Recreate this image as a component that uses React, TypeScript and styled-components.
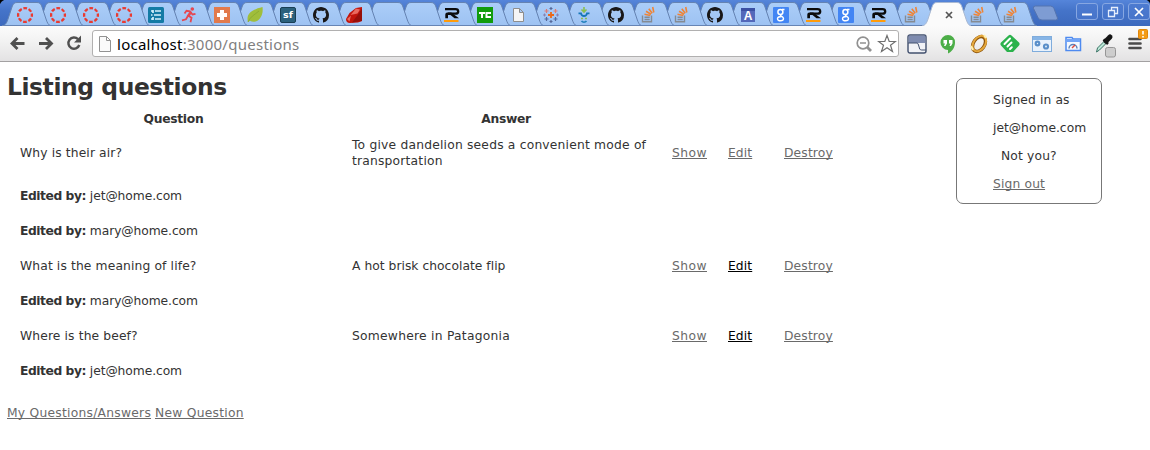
import React from "react";
import styled, { createGlobalStyle } from "styled-components";

const GlobalStyle = createGlobalStyle`
  * { box-sizing: border-box; }
  body {
    margin: 0;
    background: #fff;
    color: #333;
    font-family: "DejaVu Sans", Verdana, sans-serif;
    font-size: 12.3px;
    line-height: 16px;
  }
`;

const Window = styled.div`
  width: 1150px;
  height: 450px;
  overflow: hidden;
  background: #fff;
`;

const TabStrip = styled.div`
  display: flex;
  height: 26px;
  padding: 2px 0 0 2px;
  background:
    radial-gradient(circle at 7px 7px, transparent 7px, #000 8px) 0 0 / 6px 6px no-repeat,
    radial-gradient(circle at 0 6px, transparent 6px, #000 7px) 100% 0 / 6px 6px no-repeat,
    linear-gradient(#5585da, #4574c9 40%, #3c69bd);
`;

const TabBox = styled.div<{ $order: number }>`
  display: grid;
  flex: none;
  width: 49px;
  height: 24px;
  margin-right: -16.15px;
  position: relative;
  z-index: ${(p) => p.$order};
  > * { grid-area: 1 / 1; }
`;

const IconSlot = styled.div<{ $shift?: number }>`
  display: flex;
  width: 16px;
  height: 16px;
  margin: 5px 0 0 ${(p) => 15 + (p.$shift ?? 0)}px;
  svg { display: block; overflow: visible; }
`;

const NewTab = styled.svg`
  flex: none;
  margin: 3px 0 0 11px;
`;

const Controls = styled.div`
  display: flex;
  gap: 4px;
  margin: 1px 0 0 auto;
`;

const Control = styled.div`
  display: flex;
  align-items: center;
  justify-content: center;
  width: 22px;
  height: 17px;
  border: 1px solid #87a7e2;
  border-radius: 3px;
  background: linear-gradient(#4d7bd0, #4674ca);
`;

const Toolbar = styled.div`
  display: flex;
  align-items: center;
  height: 36px;
  padding-left: 8px;
  border-bottom: 1px solid #a3a1a2;
  background: linear-gradient(#fbfbfb, #f3f3f3 40%, #e3e2e3);
`;

const NavButton = styled.div`
  display: flex;
  width: 28px;
  height: 28px;
  align-items: center;
  svg { display: block; }
`;

const Omnibox = styled.div`
  display: flex;
  align-items: center;
  width: 807px;
  height: 27px;
  padding: 0 1px 0 6px;
  border: 1px solid #b1b0b0;
  border-radius: 3px;
  background: #fff;
  svg { flex: none; }
`;

const Url = styled.div`
  flex: 1;
  padding-left: 6px;
  color: #808080;
  font: 15px/24px "Noto Sans", "Open Sans", sans-serif;
  letter-spacing: 0.26px;
  b { color: #000; font-weight: 400; }
`;

const Extensions = styled.div`
  display: flex;
  align-items: center;
  padding-left: 8px;
  gap: 11.15px;
  svg { display: block; flex: none; overflow: visible; }
`;

const Page = styled.div`
  display: flex;
  align-items: flex-start;
  padding: 11px 48px 0 7px;
`;

const Main = styled.main`
  flex: 1;
`;

const Title = styled.h1`
  margin: 0;
  height: 37px;
  font-size: 23.4px;
  line-height: 28px;
  font-weight: 700;
  letter-spacing: -0.41px;
`;

const Row = styled.div<{ $height: number }>`
  display: grid;
  grid-template-columns: 332px 320px 56px 56px 80px;
  align-items: center;
  height: ${(p) => p.$height}px;
  padding-left: 13px;
`;

const HeadCell = styled.div<{ $width: number }>`
  width: ${(p) => p.$width}px;
  text-align: center;
  font-weight: 700;
  letter-spacing: -0.3px;
`;

const Editor = styled.div`
  grid-column: 1 / -1;
  letter-spacing: -0.08px;
  b { font-weight: 700; letter-spacing: -0.45px; }
`;

const Text = styled.span<{ $spacing?: number }>`
  letter-spacing: ${(p) => p.$spacing ?? 0.2}px;
`;

const Link = styled.a<{ $hot?: boolean; $spacing?: number }>`
  color: ${(p) => (p.$hot ? "#000" : "#6a6a6a")};
  letter-spacing: ${(p) => p.$spacing ?? 0.25}px;
  text-decoration: underline;
  text-decoration-thickness: 1px;
  text-underline-offset: 1px;
  text-decoration-skip-ink: none;
`;

const Footer = styled.div`
  margin-top: 17px;
`;

const Account = styled.aside`
  width: 146px;
  height: 126px;
  margin-top: 5px;
  padding: 7px 0 0 36px;
  border: 1px solid #777;
  border-radius: 7px;
  line-height: 28px;
`;

const AccountLine = styled.div<{ $indent?: number; $spacing?: number }>`
  padding-left: ${(p) => p.$indent ?? 0}px;
  letter-spacing: ${(p) => p.$spacing ?? 0}px;
`;

type IconName =
  | "ring" | "list" | "runner" | "plus" | "leaf" | "sf" | "github" | "ruby" | "none" | "r"
  | "tc" | "doc" | "tableau" | "smile" | "stack" | "a" | "g" | "close";

const Icon = ({ name }: { name: IconName }) => (
  <svg width="16" height="16" viewBox="0 0 16 16">
    {name === "ring" && (
      <circle cx="8" cy="8" r="6.9" fill="none" stroke="#ea3a30" strokeWidth="2.3" strokeDasharray="3.7 1.719" strokeDashoffset="1.85" />
    )}
    {name === "list" && (
      <>
        <rect width="16" height="16" rx="1.5" fill="#147ba5" />
        <path d="M3 4h2m2 0h6M6 8h7M3 8h1.5M3 12h2m2 0h6M5 3v3m0 4v3" stroke="#d5f1fc" strokeWidth="1.7" fill="none" />
      </>
    )}
    {name === "runner" && (
      <>
        <circle cx="11.3" cy="2" r="1.8" fill="#e54750" />
        <path d="M10 4.5 7 8.5l3.5 2.2-1 4.5M7 8.8l-2 3.5-4 1M9.5 4.5l-4-.7L3.5 6.5M9.5 5l2 2.5 3-.7" fill="none" stroke="#e54750" strokeWidth="1.8" />
        <path d="m9.500 4-3 4.500 2 1 2.500-4z" fill="#e54750" />
      </>
    )}
    {name === "plus" && (
      <>
        <rect width="16" height="16" fill="#e27a4c" />
        <path d="M6 3h4v3h3v4h-3v3H6v-3H3V6h3z" fill="#fff" />
      </>
    )}
    {name === "leaf" && (
      <>
        <path d="M1 15C-1 8 3 3 15.5 0c1 7-2 13-7 14.500-2 .7-4 .2-5.500-.7z" fill="#a0be3b" />
        <path d="M1 15C3 10 7 8 12 4" stroke="#8dac32" fill="none" />
      </>
    )}
    {name === "sf" && (
      <>
        <rect x=".5" y=".5" width="15" height="15" rx="1.5" fill="#2b617d" stroke="#183e54" />
        <text x="8" y="11" textAnchor="middle" fontFamily="DejaVu Sans" fontSize="9.5" fontWeight="700" fill="#fff">sf</text>
      </>
    )}
    {name === "github" && (
      <path
        fill="#191717"
        d="M8 0C3.580 0 0 3.580 0 8c0 3.540 2.290 6.530 5.470 7.590.4.070.55-.17.55-.38 0-.19-.01-.82-.01-1.490-2.010.37-2.530-.49-2.690-.94-.09-.23-.48-.94-.82-1.130-.28-.15-.68-.52-.01-.53.63-.01 1.080.58 1.230.82.72 1.210 1.870.87 2.330.66.070-.52.28-.87.51-1.070-1.780-.2-3.640-.89-3.640-3.950 0-.87.31-1.590.82-2.150-.08-.2-.36-1.020.08-2.120 0 0 .67-.21 2.200.82.64-.18 1.320-.27 2-.27s1.360.09 2 .27c1.530-1.040 2.200-.82 2.200-.82.44 1.100.16 1.920.08 2.120.51.56.82 1.270.82 2.150 0 3.070-1.870 3.750-3.650 3.950.29.25.54.73.54 1.480 0 1.070-.01 1.930-.01 2.200 0 .21.15.46.55.38A8.010 8.010 0 0 0 16 8c0-4.420-3.580-8-8-8z"
      />
    )}
    {name === "ruby" && (
      <>
        <path d="M0 12 3.500 6 10 1l6-1v14l-4 1.500-8 .5q-4 0-4-4z" fill="#c2150c" />
        <path d="m10 1.500 4 1-2.500 4L4.500 8zM1 12l4-3.500-1.500 6z" fill="#ea6a5f" />
        <path d="m12 7.500 4-6V14l-10 1.500z" fill="#960f0a" />
      </>
    )}
    {name === "r" && (
      <>
        <path d="M1 2.200h10.500q2.700 0 2.700 2.200t-2.700 2.300H4" fill="none" stroke="#0b0b0b" strokeWidth="2.300" />
        <path d="M1.300 11.300V7.500q0-2 2-2h4l7.700 5.800h-4.500L6.500 8H4v3.300z" fill="#0b0b0b" />
        <path d="M0 14h14.500" stroke="#ff9b0a" strokeWidth="2" />
      </>
    )}
    {name === "tc" && (
      <>
        <rect width="16" height="16" fill="#119c0c" />
        <path d="M2 6h6M5 5v6m9-5H9.500v4H14" stroke="#fff" strokeWidth="2" fill="none" />
      </>
    )}
    {name === "doc" && <path d="M3.500 1.500h6l4 4v9h-10zM9.500 1.500v4h4" fill="#f5f5f5" stroke="#8e8e8e" />}
    {name === "tableau" && (
      <g fill="none">
        <path d="M8 5v6M5 8h6" stroke="#ec6717" strokeWidth="1.800" />
        <path d="M3.500 2v4m-2-2h4M12.500 2v4m-2-2h4" stroke="#e07a72" strokeWidth="1.200" />
        <path d="M3.500 10v4m-2-2h4M12.500 10v4m-2-2h4M8 0v3M6.500 1.500h3M8 13v3m-1.500-1.500h3" stroke="#56699a" strokeWidth="1.200" />
        <path d="M1.500 6.500v3M0 8h3m11.500-1.500v3M13 8h3" stroke="#8c80af" />
      </g>
    )}
    {name === "smile" && (
      <g fill="none">
        <path d="M8 0v4M5.500 2.500 8 5l2.500-2.500" stroke="#8abe50" strokeWidth="1.600" />
        <path d="M2.500 6.300H5q.5 2.700 3 2.700t3-2.700h2.500" stroke="#1576b8" strokeWidth="1.800" />
        <path d="M5 11.500h2m2 0h2" stroke="#8abe50" strokeWidth="1.500" />
        <path d="M5.500 14c1 1.500 4 1.500 5 0" stroke="#2382bd" strokeWidth="1.500" />
      </g>
    )}
    {name === "stack" && (
      <g fill="none">
        <path d="M1.500 8.500v6.300h9V8.500M3.500 12.500h5.200M3.500 10.300h5.200" stroke="#858b93" strokeWidth="1.400" />
        <path d="m3.500 7.300 5.800 1.200M5 4.300l5 3M7.800 1.800l3.400 4.400M11.700 0l1.100 5.500" stroke="#ef8436" strokeWidth="1.600" />
      </g>
    )}
    {name === "a" && (
      <>
        <rect x="1" y="1" width="14" height="14" fill="#5368ba" />
        <path d="M1 1h14v3H1z" fill="#3b50a3" />
        <text x="8" y="13" textAnchor="middle" fontFamily="Liberation Sans" fontSize="12" fontWeight="700" fill="#fff">A</text>
      </>
    )}
    {name === "g" && (
      <>
        <rect width="16" height="16" rx="1" fill="#4285f4" />
        <g fill="none" stroke="#fff">
          <circle cx="7.400" cy="5" r="2.500" strokeWidth="1.500" />
          <path d="M9 2.500h2.500M7.500 7.500c-1 1.500 3 1.500 3 4 0 3-6 3-6 .300 0-1.800 2-2.300 4-2.300" strokeWidth="1.400" />
        </g>
      </>
    )}
    {name === "close" && <path d="m5 5 6 6m0-6-6 6" stroke="#555" strokeWidth="1.700" />}
  </svg>
);

const tabs: IconName[] = [
  "ring", "ring", "ring", "ring", "list", "runner", "plus", "leaf", "sf", "github", "ruby",
  "none", "none", "r", "tc", "doc", "tableau", "smile", "github", "stack", "stack", "github",
  "a", "g", "r", "g", "r", "stack", "close", "stack", "stack",
];

const Tab = ({ name, order }: { name: IconName; order: number }) => {
  const active = name === "close";
  const outline = "M0 24C4 23 5 20 6 17L10 5C11 2 12 .5 15 .5H35C38 .5 39 2 40 5L44 17C45 20 46 23 49 24";
  return (
    <TabBox $order={active ? 50 : order}>
      <svg width="49" height="24">
        <defs>
          <linearGradient id="tabFill" x2="0" y2="1">
            <stop stopColor="#abcdf8" />
            <stop offset="1" stopColor="#9dc2f2" />
          </linearGradient>
        </defs>
        <path d={outline} fill={active ? "#fbfbfb" : "url(#tabFill)"} stroke={active ? "#a9b9d3" : "#6583b2"} />
        {!active && <path d="M0 23.500h49" stroke="#6684b4" />}
      </svg>
      <IconSlot $shift={active ? 4 : 0}>
        <Icon name={name} />
      </IconSlot>
    </TabBox>
  );
};

const BrowserBar = () => (
  <>
    <TabStrip>
      {tabs.map((name, i) => (
        <Tab key={i} name={name} order={40 - i} />
      ))}
      <NewTab width="27" height="17">
        <path d="M3.500 1h15q2.500 0 3.500 2.500l3.500 9.500q.5 2-2 2H10q-3 0-4-2.500L1.500 3.500Q.8 1 3.500 1z" fill="#7e9cd3" stroke="#5474b0" />
      </NewTab>
      <Controls>
        <Control>
          <svg width="14" height="12"><path d="M2 8.500h10" stroke="#fff" strokeWidth="2" /></svg>
        </Control>
        <Control>
          <svg width="12" height="12" fill="none" stroke="#e6eefc" strokeWidth="1.300">
            <path d="M4.500 4V1.500h6v6H8M1.500 4.500h6v6h-6z" />
          </svg>
        </Control>
        <Control>
          <svg width="12" height="12"><path d="m2 2 8 8m0-8-8 8" stroke="#fff" strokeWidth="1.700" /></svg>
        </Control>
      </Controls>
    </TabStrip>
    <Toolbar>
      <NavButton>
        <svg width="20" height="20" fill="none" stroke="#505050" strokeWidth="2.800"><path d="M16.500 9.500H4M9.500 4 4 9.500 9.500 15" /></svg>
      </NavButton>
      <NavButton>
        <svg width="20" height="20" fill="none" stroke="#505050" strokeWidth="2.800"><path d="M3 9.500h12.500M10 4l5.500 5.500L10 15" /></svg>
      </NavButton>
      <NavButton>
        <svg width="20" height="20"><path d="M14 5.200A5.600 5.600 0 1 0 15.300 11" fill="none" stroke="#505050" strokeWidth="2.400" /><path d="M17 1.500v7h-7z" fill="#505050" /></svg>
      </NavButton>
      <Omnibox>
        <svg width="12" height="16" fill="#fafafa" stroke="#929292"><path d="M.5.5h7l4 4v11H.5zM7.500.5v4h4" /></svg>
        <Url><b>localhost</b>:3000/questions</Url>
        <svg width="18" height="18" fill="none" stroke="#919191"><circle cx="8" cy="8" r="5.800" strokeWidth="1.700" /><path d="M5 8h6" strokeWidth="1.500" /><path d="m12 12 4 4" strokeWidth="2.800" /></svg>
        <svg width="20" height="20" style={{ marginLeft: 4 }} fill="#fff" stroke="#707070" strokeWidth="1.200"><path d="m10 1.500 2.200 6h6.300l-5 3.800 2 6.200-5.500-3.800-5.500 3.800 2-6.200-5-3.800h6.300z" /></svg>
      </Omnibox>
      <Extensions>
        <svg width="20" height="20">
          <rect x="1" y="1" width="18" height="18" rx="2" fill="#f1f2f6" stroke="#42506e" strokeWidth="1.400" />
          <path d="M1.700 1.700h16.600V9H1.700z" fill="#7f8cb0" /><path d="M1 9h9q1 0 1.500 2l1.200 4q.5 1 2 1H19" fill="none" stroke="#42506e" />
        </svg>
        <svg width="20" height="20">
          <path d="M10 1a7.200 7.200 0 1 0 0 15v3.500c4-2 7-6 7-11A7 7 0 0 0 10 1z" fill="#4cae48" />
          <path d="M5.500 6H9v3.500L7.500 12H6l1-2.500H5.500zM11 6h3.500v3.500L13 12h-1.500l1-2.500H11z" fill="#fff" />
        </svg>
        <svg width="20" height="20" fill="none">
          <ellipse cx="10" cy="10" rx="5.500" ry="8.200" transform="rotate(35 10 10)" stroke="#8f560c" strokeWidth="3.400" />
          <ellipse cx="10" cy="9.500" rx="5.800" ry="8.500" transform="rotate(35 10 10)" stroke="#e5a83c" strokeWidth="2" />
          <path d="m2 12 2 4m11-15 2 3" stroke="#fff0b2" strokeWidth="2" />
        </svg>
        <svg width="20" height="20">
          <path d="M8.500 1.500q1.500-1.500 3 0L19 8.500q1.200 1.500 0 3L13 18H7l-6-6.500q-1.200-1.500 0-3z" fill="#2bb24c" />
          <path d="m4.500 10 5.500-5.500M7.500 12.500l4-4M10 15l1.800-1.800" stroke="#fff" strokeWidth="2" strokeLinecap="round" />
        </svg>
        <svg width="20" height="20">
          <rect x=".5" y="2.500" width="19" height="15" fill="#e9f2fc" stroke="#7facdc" /><path d="M1 3h18v3H1z" fill="#87b5e6" />
          <circle cx="5.500" cy="9.500" r="1.800" fill="none" stroke="#5a8fc9" strokeWidth="2.200" />
          <circle cx="14" cy="12.500" r="2" fill="none" stroke="#5a8fc9" strokeWidth="2.200" />
        </svg>
        <svg width="20" height="20">
          <path d="M3 3.500h6l1 1.500h7.500v11.500H3z" fill="#f4f8ff" stroke="#4e8af0" strokeWidth="1.500" /><path d="M3 5h14v3H3z" fill="#72a4f6" />
          <path d="M6 14.500a4 4 0 0 1 8 0" fill="none" stroke="#5c82ba" strokeWidth="1.500" /><path d="m9 14 3-3" stroke="#e24c3e" strokeWidth="1.500" />
        </svg>
        <svg width="20" height="20">
          <path d="m2.500 18 1-4 7-7 2 2-7 7z" fill="#bce7d7" stroke="#397365" /><path d="m9.500 5.500 4.500 4.500" stroke="#151515" strokeWidth="2.500" />
          <path d="m12 7 4-4" stroke="#151515" strokeWidth="5" strokeLinecap="round" />
          <rect x="11.500" y="13.500" width="10" height="9.500" rx="2" fill="#cdcdcd" stroke="#969696" />
        </svg>
        <svg width="20" height="20">
          <path d="M4.500 5h11M4.500 9.500h11M4.500 14h11" stroke="#4b4b4b" strokeWidth="2.600" strokeLinecap="round" />
          <rect x="13.500" y="-4.500" width="9" height="9" rx="1" fill="#f39b16" stroke="#e28709" /><path d="M18-3v3.500M18 2v1.500" stroke="#fff" strokeWidth="1.600" />
        </svg>
      </Extensions>
    </Toolbar>
  </>
);

interface Entry {
  question: string;
  answer: string;
  height: number;
  hot: boolean;
  spacing: number;
  editors: string[];
}

const entries: Entry[] = [
  { question: "Why is their air?", answer: "To give dandelion seeds a convenient mode of transportation", height: 51, hot: false, spacing: 0.2, editors: ["jet@home.com", "mary@home.com"] },
  { question: "What is the meaning of life?", answer: "A hot brisk chocolate flip", height: 35, hot: true, spacing: 0.03, editors: ["mary@home.com"] },
  { question: "Where is the beef?", answer: "Somewhere in Patagonia", height: 35, hot: true, spacing: 0.25, editors: ["jet@home.com"] },
];

export default function App() {
  return (
    <Window>
      <GlobalStyle />
      <BrowserBar />
      <Page>
        <Main>
          <Title>Listing questions</Title>
          <Row $height={17}>
            <HeadCell $width={307}>Question</HeadCell>
            <HeadCell $width={308}>Answer</HeadCell>
          </Row>
          {entries.map((e) => (
            <React.Fragment key={e.question}>
              <Row $height={e.height}>
                <Text $spacing={0.13}>{e.question}</Text>
                <Text $spacing={e.spacing}>{e.answer}</Text>
                <span><Link $spacing={0.45}>Show</Link></span>
                <span><Link $hot={e.hot} $spacing={0.1}>Edit</Link></span>
                <span><Link $spacing={0.15}>Destroy</Link></span>
              </Row>
              {e.editors.map((who) => (
                <Row $height={35} key={who}>
                  <Editor><b>Edited by:</b> {who}</Editor>
                </Row>
              ))}
            </React.Fragment>
          ))}
          <Footer><Link>My Questions/Answers</Link> <Link>New Question</Link></Footer>
        </Main>
        <Account>
          <AccountLine $spacing={0.12}>Signed in as</AccountLine>
          <AccountLine>jet@home.com</AccountLine>
          <AccountLine $indent={8} $spacing={0.15}>Not you?</AccountLine>
          <AccountLine><Link $spacing={0.15}>Sign out</Link></AccountLine>
        </Account>
      </Page>
    </Window>
  );
}
